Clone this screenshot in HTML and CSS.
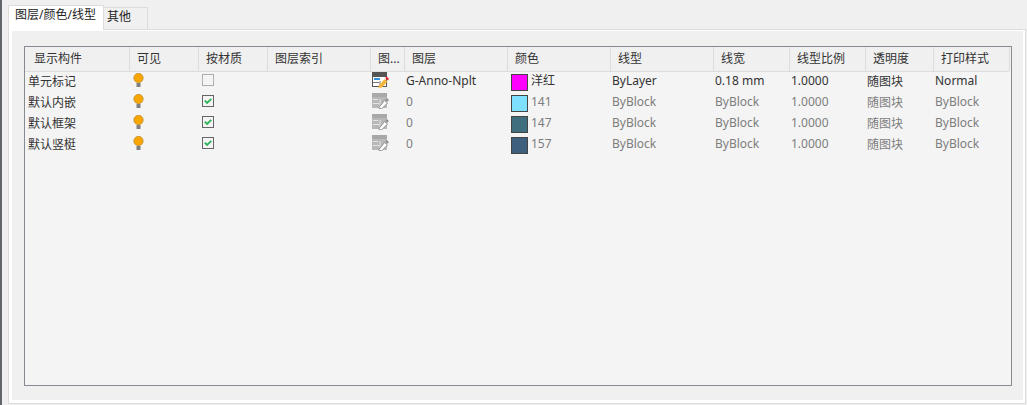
FILE: index.html
```html
<!DOCTYPE html>
<html lang="zh">
<head>
<meta charset="utf-8">
<title>显示构件</title>
<link rel="stylesheet" href="styles.css">
</head>
<body>
<svg width="0" height="0" class="defs">
  <defs>
    <symbol id="bulb" viewBox="0 0 11 14">
      <circle cx="5.5" cy="5" r="4.7" fill="#f9a602" stroke="#b98a30" stroke-width=".7"/>
      <rect x="3.5" y="10" width="4" height="4" fill="#808080"/>
    </symbol>
    <symbol id="check" viewBox="0 0 12 12">
      <rect x=".5" y=".5" width="11" height="11" fill="#f4f4f4" stroke="#666"/>
      <path d="M2.8 5.6 5.1 8 9.3 3.9" fill="none" stroke="#2fb35a" stroke-width="1.9"/>
    </symbol>
    <symbol id="uncheck" viewBox="0 0 12 12">
      <rect x=".5" y=".5" width="11" height="11" fill="#f4f4f4" stroke="#b0b0b0"/>
    </symbol>
    <symbol id="style-on" viewBox="0 0 17 16">
      <rect x="0" y="0" width="15" height="4" fill="#555"/>
      <rect x=".5" y="4.500" width="14" height="10" fill="#fff" stroke="#555"/>
      <rect x="2" y="6" width="6" height="2" fill="#2f8ee0"/>
      <path d="M1 10.500h6M8 9v6" stroke="#777"/>
      <path d="M7 13.500 12.500 7l3 2.500-5.500 6-3.500.5z" fill="#f4b63c"/>
      <path d="M13.200 6 14.700 4.500 17 6.700 15.800 8.500z" fill="#e8242c"/>
    </symbol>
    <symbol id="style-off" viewBox="0 0 17 16">
      <rect x="0" y="0" width="15" height="4" fill="#a8a8a8"/>
      <rect x="0" y="4" width="15" height="11" fill="#b8b8b8"/>
      <path d="M1 6.500h5M1 10.500h6M8 6v8" stroke="#e4e4e4"/>
      <path d="M6.500 15 12.500 7.500l3 2.500-6 6z" fill="#fff" stroke="#8e8e8e"/>
      <path d="M13.500 6.500 14.800 5 16.900 7 15.600 8.700z" fill="#8e8e8e"/>
    </symbol>
  </defs>
</svg>
<div class="page">
  <div class="tabs">
    <div class="tab tab-active">图层/颜色/线型</div>
    <div class="tab">其他</div>
  </div>
  <div class="panel">
    <div class="panel-body">
      <div class="table">
        <div class="row head">
          <div class="hc c1">显示构件</div>
          <div class="hc c2">可见</div>
          <div class="hc c3">按材质</div>
          <div class="hc c4">图层索引</div>
          <div class="hc c5">图...</div>
          <div class="hc c6">图层</div>
          <div class="hc c7">颜色</div>
          <div class="hc c8">线型</div>
          <div class="hc c9">线宽</div>
          <div class="hc c10">线型比例</div>
          <div class="hc c11">透明度</div>
          <div class="hc c12">打印样式</div>
        </div>
        <div class="row">
          <div class="td c1">单元标记</div>
          <div class="td c2"><svg class="bulb"><use href="#bulb"/></svg></div>
          <div class="td c3"><svg class="box"><use href="#uncheck"/></svg></div>
          <div class="td c4"></div>
          <div class="td c5"><svg class="style"><use href="#style-on"/></svg></div>
          <div class="td c6">G-Anno-Nplt</div>
          <div class="td c7"><span class="swatch s-magenta"></span>洋红</div>
          <div class="td c8">ByLayer</div>
          <div class="td c9">0.18 mm</div>
          <div class="td c10">1.0000</div>
          <div class="td c11">随图块</div>
          <div class="td c12">Normal</div>
        </div>
        <div class="row">
          <div class="td c1">默认内嵌</div>
          <div class="td c2"><svg class="bulb"><use href="#bulb"/></svg></div>
          <div class="td c3"><svg class="box"><use href="#check"/></svg></div>
          <div class="td c4"></div>
          <div class="td c5"><svg class="style"><use href="#style-off"/></svg></div>
          <div class="td c6 dim">0</div>
          <div class="td c7 dim"><span class="swatch s-141"></span>141</div>
          <div class="td c8 dim">ByBlock</div>
          <div class="td c9 dim">ByBlock</div>
          <div class="td c10 dim">1.0000</div>
          <div class="td c11 dim">随图块</div>
          <div class="td c12 dim">ByBlock</div>
        </div>
        <div class="row">
          <div class="td c1">默认框架</div>
          <div class="td c2"><svg class="bulb"><use href="#bulb"/></svg></div>
          <div class="td c3"><svg class="box"><use href="#check"/></svg></div>
          <div class="td c4"></div>
          <div class="td c5"><svg class="style"><use href="#style-off"/></svg></div>
          <div class="td c6 dim">0</div>
          <div class="td c7 dim"><span class="swatch s-147"></span>147</div>
          <div class="td c8 dim">ByBlock</div>
          <div class="td c9 dim">ByBlock</div>
          <div class="td c10 dim">1.0000</div>
          <div class="td c11 dim">随图块</div>
          <div class="td c12 dim">ByBlock</div>
        </div>
        <div class="row">
          <div class="td c1">默认竖梃</div>
          <div class="td c2"><svg class="bulb"><use href="#bulb"/></svg></div>
          <div class="td c3"><svg class="box"><use href="#check"/></svg></div>
          <div class="td c4"></div>
          <div class="td c5"><svg class="style"><use href="#style-off"/></svg></div>
          <div class="td c6 dim">0</div>
          <div class="td c7 dim"><span class="swatch s-157"></span>157</div>
          <div class="td c8 dim">ByBlock</div>
          <div class="td c9 dim">ByBlock</div>
          <div class="td c10 dim">1.0000</div>
          <div class="td c11 dim">随图块</div>
          <div class="td c12 dim">ByBlock</div>
        </div>
      </div>
    </div>
  </div>
</div>
</body>
</html>
```
FILE: styles.css
```css
* { box-sizing: border-box; }
html, body { margin: 0; height: 100%; }
body {
  width: 1027px;
  height: 405px;
  overflow: hidden;
  background: linear-gradient(to right, #62666a 0, #62666a 2px, #f0f0f0 2px);
  font-family: "Noto Sans", "Noto Sans CJK SC", sans-serif;
  font-size: 12px;
  color: #333;
}
.defs { display: block; height: 0; }
.page { padding: 5px 1px 0 8px; height: 405px; display: flex; flex-direction: column; }
.tabs { display: flex; height: 25px; }
.tab {
  height: 24px;
  margin-top: 2px;
  width: 44px;
  padding: 1px 0 0 3px;
  background: #f0f0f0;
  border: 1px solid #dcdcdc;
  border-left: none;
  line-height: 16px;
  color: #222;
}
.tab-active {
  width: 96px;
  height: 25px;
  margin-top: 0;
  padding: 1px 0 0 6px;
  background: #fff;
  border: 1px solid #dcdcdc;
  border-bottom: none;
  position: relative;
  z-index: 1;
}
.panel {
  width: 1018px;
  height: 375px;
  margin-top: -1px;
  border: 1px solid #dcdcdc;
  background: #fff;
  padding: 1px 2px 3px 3px;
}
.panel-body {
  height: 100%;
  background: #f0f0f0;
  padding: 15px 0 0 12px;
}
.table {
  width: 988px;
  height: 340px;
  border: 1px solid #868b92;
  background: #f4f4f4;
}
.row { display: flex; height: 21px; }
.head { height: 25px; background: #f0f0f0; border-bottom: 1px solid #dcdcdc; margin-right: 2px; }
.hc, .td { flex: none; overflow: hidden; white-space: nowrap; }
.hc { line-height: 23px; border-right: 1px solid #dcdcdc; padding-left: 7px; }
.hc.c1 { padding-left: 9px; }
.td { padding: 0 0 3px 1px; display: flex; align-items: center; }
.td.c1 { padding-left: 3px; }
.td.c6, .td.c7, .td.c8, .td.c9, .td.c10, .td.c12 { padding-bottom: 5px; }
.c1 { width: 105px; }
.c2 { width: 69px; }
.c3 { width: 69px; }
.c4 { width: 103px; }
.c5 { width: 34px; }
.c6 { width: 103px; }
.c7 { width: 103px; }
.c8 { width: 103px; }
.c9 { width: 76px; }
.c10 { width: 76px; }
.c11 { width: 68px; }
.c12 { width: 76px; }
.dim { color: #7d7d7d; }
.bulb { width: 11px; height: 14px; margin: -2px 0 0 2px; }
.box { width: 12px; height: 12px; margin: -2px 0 0 2px; }
.style { width: 17px; height: 16px; margin: -3px 0 0 0; }
.swatch {
  width: 17px;
  height: 17px;
  margin: 5px 3px 0 2px;
  border: 1px solid #444;
  flex: none;
}
.s-magenta { background: #ff00ff; }
.s-141 { background: #7fdfff; }
.s-147 { background: #3f6f7f; }
.s-157 { background: #3f5f7f; }
```
